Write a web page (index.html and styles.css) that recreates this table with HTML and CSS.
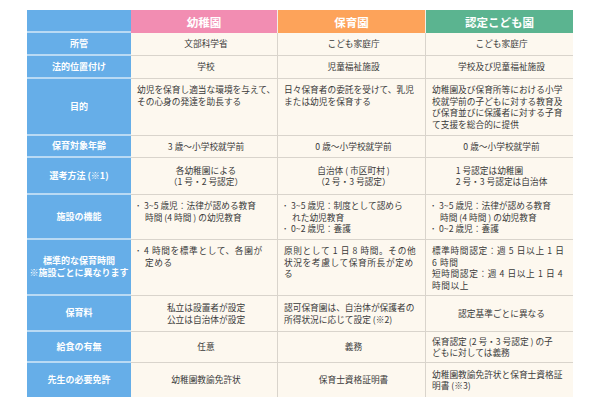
FILE: index.html
```html
<!DOCTYPE html>
<html lang="ja">
<head>
<meta charset="utf-8">
<link rel="stylesheet" href="styles.css">
</head>
<body>
<div class="tbl">
  <div class="lab hd0"></div>
  <div class="hd pink">幼稚園</div>
  <div class="hd orange">保育園</div>
  <div class="hd green">認定こども園</div>

  <div class="lab">所管</div>
  <div class="d c"><div class="tx">文部科学省</div></div>
  <div class="d c"><div class="tx">こども家庭庁</div></div>
  <div class="d c last"><div class="tx">こども家庭庁</div></div>

  <div class="lab">法的位置付け</div>
  <div class="d c"><div class="tx">学校</div></div>
  <div class="d c"><div class="tx">児童福祉施設</div></div>
  <div class="d c last"><div class="tx">学校及び児童福祉施設</div></div>

  <div class="lab">目的</div>
  <div class="d t"><div class="tx">幼児を保育し適当な環境を与えて、<br>その心身の発達を助長する</div></div>
  <div class="d t"><div class="tx">日々保育者の委託を受けて、乳児<br>または幼児を保育する</div></div>
  <div class="d t last"><div class="tx">幼稚園及び保育所等における小学<br>校就学前の子どもに対する教育及<br>び保育並びに保護者に対する子育<br>て支援を総合的に提供</div></div>

  <div class="lab">保育対象年齢</div>
  <div class="d c"><div class="tx">3 歳〜小学校就学前</div></div>
  <div class="d c"><div class="tx">0 歳〜小学校就学前</div></div>
  <div class="d c last"><div class="tx">0 歳〜小学校就学前</div></div>

  <div class="lab">選考方法 (※1)</div>
  <div class="d c"><div class="tx">各幼稚園による<br>（1 号・2 号認定）</div></div>
  <div class="d c"><div class="tx">自治体 ( 市区町村 )<br>（2 号・3 号認定）</div></div>
  <div class="d c last"><div class="tx la">1 号認定は幼稚園<br>2 号・3 号認定は自治体</div></div>

  <div class="lab">施設の機能</div>
  <div class="d t"><ul class="bl"><li>3~5 歳児：法律が認める教育<br>時間 (4 時間 ) の幼児教育</li></ul></div>
  <div class="d t"><ul class="bl"><li>3~5 歳児：制度として認めら<br>れた幼児教育</li><li>0~2 歳児：養護</li></ul></div>
  <div class="d t last"><ul class="bl"><li>3~5 歳児：法律が認める教育<br>時間 (4 時間 ) の幼児教育</li><li>0~2 歳児：養護</li></ul></div>

  <div class="lab">標準的な保育時間<br>※施設ごとに異なります</div>
  <div class="d t"><ul class="bl ls"><li>4 時間を標準として、各園が<br>定める</li></ul></div>
  <div class="d t"><div class="tx ls">原則として 1 日 8 時間。その他<br>状況を考慮して保育所長が定め<br>る</div></div>
  <div class="d t last"><div class="tx ls tight">標準時間認定：週 5 日以上 1 日<br>6 時間<br>短時間認定：週 4 日以上 1 日 4<br>時間以上</div></div>

  <div class="lab">保育料</div>
  <div class="d c"><div class="tx">私立は設置者が設定<br>公立は自治体が設定</div></div>
  <div class="d"><div class="tx">認可保育園は、自治体が保護者の<br>所得状況に応じて設定 (※2)</div></div>
  <div class="d c last"><div class="tx">認定基準ごとに異なる</div></div>

  <div class="lab">給食の有無</div>
  <div class="d c"><div class="tx">任意</div></div>
  <div class="d c"><div class="tx">義務</div></div>
  <div class="d last"><div class="tx">保育認定 (2 号・3 号認定 ) の子<br>どもに対しては義務</div></div>

  <div class="lab lastrow">先生の必要免許</div>
  <div class="d c lastrow"><div class="tx">幼稚園教諭免許状</div></div>
  <div class="d c lastrow"><div class="tx">保育士資格証明書</div></div>
  <div class="d last lastrow"><div class="tx">幼稚園教諭免許状と保育士資格証<br>明書 (※3)</div></div>
</div>
</body>
</html>
```

FILE: styles.css
```css
* { box-sizing: border-box; }
html, body { margin: 0; padding: 0; background: #ffffff; }
body {
  font-family: "Noto Sans CJK JP", "Noto Sans", sans-serif;
  color: #3a3a3a;
}
.tbl {
  display: grid;
  grid-template-columns: 104px 147px 148px 147px;
  grid-template-rows: 23px 23px 23px 57px 22px 37px 45px 56px 36px 31px 34px;
  margin: 10px 0 0 27px;
  width: 546px;
}
.lab {
  background: #66aee8;
  color: #ffffff;
  font-weight: bold;
  font-size: 9px;
  line-height: 12px;
  text-align: center;
  display: flex;
  align-items: center;
  justify-content: center;
  border-bottom: 2px solid #b9daf4;
  white-space: nowrap;
}
.lab.lastrow { border-bottom: none; }
.hd {
  color: #ffffff;
  font-weight: bold;
  font-size: 11.5px;
  display: flex;
  align-items: center;
  justify-content: center;
  border-right: 1px solid #f3eee6;
}
.hd.green { border-right: none; }
.pink { background: #f28db2; }
.orange { background: #fda35a; }
.green { background: #5bb490; }
.d {
  background: #fdf8ef;
  font-size: 8.7px;
  line-height: 11.5px;
  display: flex;
  align-items: center;
  padding: 0 2px 0 6px;
  border-right: 1px solid #d9d4cc;
  border-bottom: 1px solid #d9d4cc;
  white-space: nowrap;
}
.d.last { border-right: none; }
.d.lastrow { border-bottom: none; }
.d.c { justify-content: center; }
.d.c .tx { text-align: center; }
.d.c .tx.la { text-align: left; }
.d.t { align-items: flex-start; padding-top: 5px; }
.ls { letter-spacing: 0.6px; }
.tight { line-height: 11.5px; }
.bl {
  list-style: none;
  margin: 0;
  padding: 0;
}
.bl li {
  padding-left: 8px;
}
.bl li::before {
  content: "･";
  display: inline-block;
  width: 8px;
  margin-left: -9px;
  text-align: left;
}
```
